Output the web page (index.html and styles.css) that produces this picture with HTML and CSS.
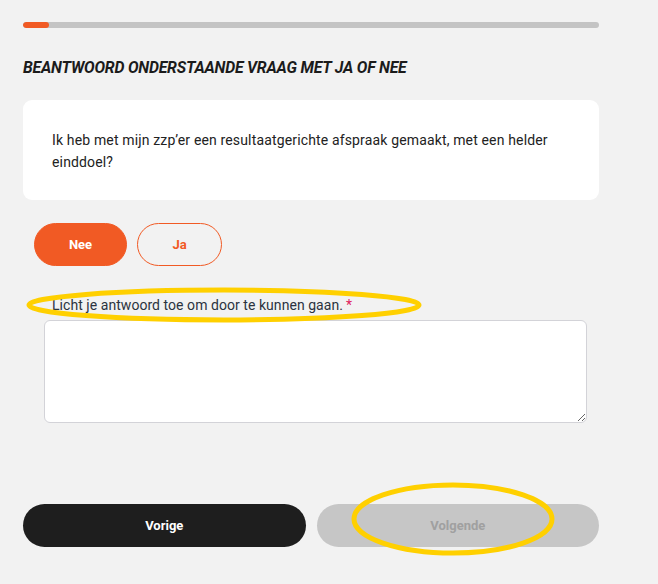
FILE: index.html
```html
<!DOCTYPE html>
<html lang="nl">
<head>
<meta charset="utf-8">
<title>Vraag</title>
<link rel="stylesheet" href="styles.css">
</head>
<body>
<main class="page">
  <div class="progress"><div class="progress-fill"></div></div>
  <h1 class="title">BEANTWOORD ONDERSTAANDE VRAAG MET JA OF NEE</h1>
  <div class="card">
    <p class="question">Ik heb met mijn zzp’er een resultaatgerichte afspraak gemaakt, met een helder einddoel?</p>
  </div>
  <div class="answers">
    <button class="answer answer-active">Nee</button>
    <button class="answer">Ja</button>
  </div>
  <div class="field">
    <label class="label">Licht je antwoord toe om door te kunnen gaan.<span class="req">*</span></label>
    <textarea class="textarea"></textarea>
  </div>
  <div class="nav">
    <button class="nav-btn nav-prev">Vorige</button>
    <button class="nav-btn nav-next">Volgende</button>
  </div>
  <svg class="mark mark-label" viewBox="0 0 400 40" width="400" height="40"><ellipse cx="200" cy="20" rx="195" ry="15" fill="none" stroke="#ffd000" stroke-width="5"/></svg>
  <svg class="mark mark-next" viewBox="0 0 210 80" width="210" height="80"><ellipse cx="105" cy="40" rx="99" ry="34" fill="none" stroke="#ffd000" stroke-width="5"/></svg>
</main>
</body>
</html>
```
FILE: styles.css
```css
* { box-sizing: border-box; }
html, body { margin: 0; background: #f2f2f2; }
body { font-family: Roboto, "Noto Sans", sans-serif; color: #1e1e1e; }
.page { position: relative; padding: 22px 0 0 23px; width: 658px; height: 584px; }
.progress { width: 576px; height: 6px; border-radius: 3px; background: #c4c4c4; overflow: hidden; }
.progress-fill { width: 26px; height: 100%; background: #f15a24; border-radius: 3px; }
.title { margin: 30px 0 0; font-size: 15.8px; line-height: 20px; font-weight: 700; font-style: italic; letter-spacing: -0.2px; color: #1b1b1b; }
.card { margin-top: 22px; width: 576px; height: 100px; background: #fff; border-radius: 9px; padding: 29px 29px 0; }
.question { margin: 0; font-size: 14px; line-height: 22px; color: #222; letter-spacing: 0.15px; }
.answers { display: flex; gap: 10px; margin: 23px 0 0 11px; }
.answer { height: 43px; border-radius: 22px; border: 1px solid #f15a24; background: transparent; color: #f15a24; font: 700 13px Roboto, sans-serif; width: 85px; padding: 0; }
.answer-active { width: 93px; background: #f15a24; color: #fff; }
.field { margin: 30px 0 0 21px; }
.label { display: block; margin-left: 8px; font-size: 14px; line-height: 18px; color: #2b3340; letter-spacing: 0.05px; }
.req { color: #e0245e; margin-left: 3px; }
.textarea { display: block; margin-top: 6px; width: 543px; height: 103px; border: 1px solid #d3d3d8; border-radius: 6px; background: #fff; resize: vertical; }
.nav { display: flex; gap: 11px; margin-top: 81px; width: 576px; }
.nav-btn { flex: 1; height: 43px; border: none; border-radius: 22px; font: 700 13px Roboto, sans-serif; }
.nav-prev { background: #1e1e1e; color: #fff; }
.nav-next { background: #c6c6c6; color: #a0a0a0; }
.mark { position: absolute; }
.mark-label { left: 24px; top: 285px; }
.mark-next { left: 348px; top: 479px; }
```
